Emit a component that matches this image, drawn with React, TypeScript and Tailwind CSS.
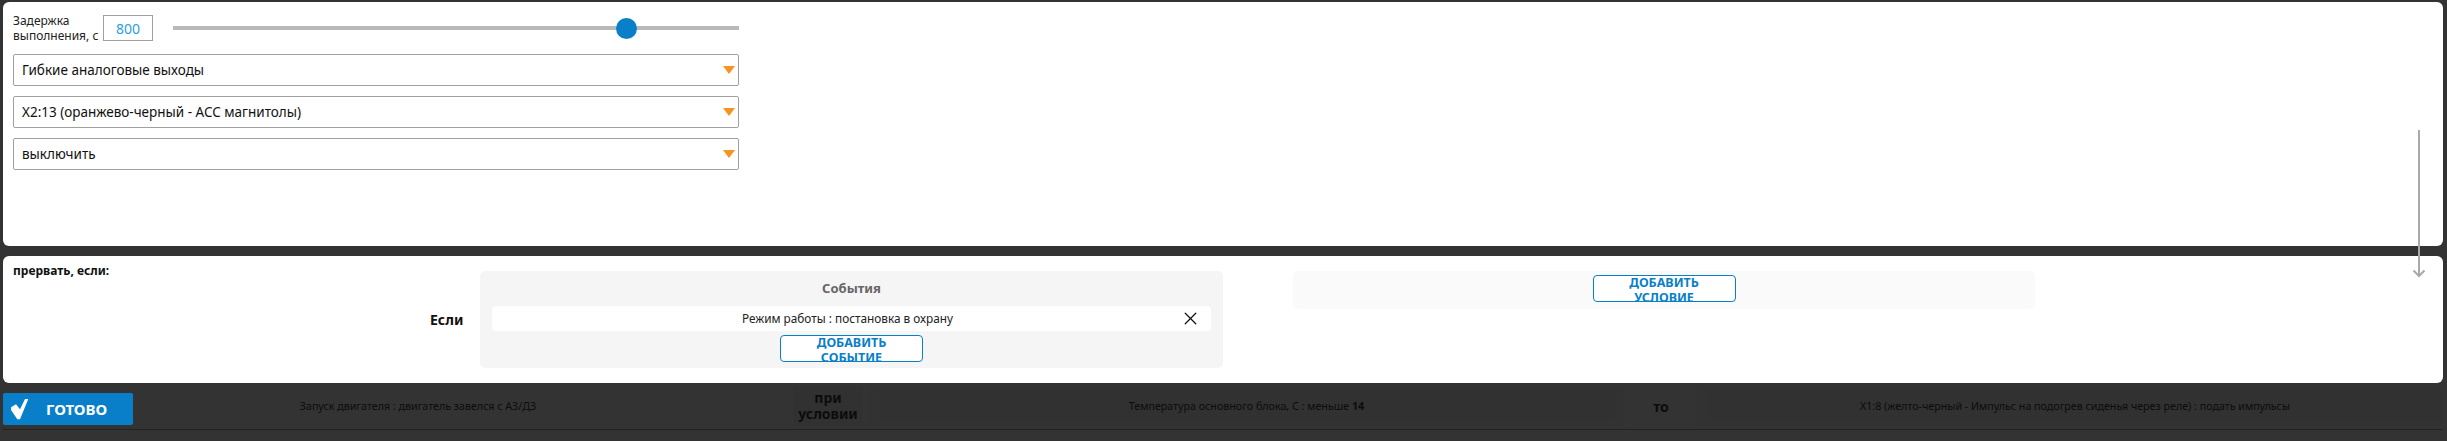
import { X } from 'lucide-react'

const font = { fontFamily: '"Noto Sans", "DejaVu Sans", sans-serif' }

function SelectBox({ text }: { text: string }) {
  return (
    <div className="relative flex h-[32px] items-center rounded-[2px] border border-[#a0a0a0] pl-[8px] text-[13.500px] text-[#111]">
      {text}
      <svg className="absolute right-[3px] top-[11px]" width="12" height="8" viewBox="0 0 12 8">
        <path d="M0 0h12L6 8z" fill="#f7931e" />
      </svg>
    </div>
  )
}

function AddButton({ lines }: { lines: string[] }) {
  return (
    <button className="h-[27px] w-[143px] overflow-hidden rounded-[4px] border border-[#0a7fc9] bg-white text-[12.500px] font-bold leading-[15px] text-[#0a7fc9]">
      {lines.map((l) => (
        <div key={l} className="-mt-[1px] mb-[1px]">{l}</div>
      ))}
    </button>
  )
}

export default function App() {
  return (
    <div className="relative h-[441px] w-[2447px] overflow-hidden bg-[#333333] pl-[3px] pr-[4px] pt-[2px]" style={font}>
      {/* top panel */}
      <div className="h-[244px] rounded-[6px] bg-white pl-[10px] pt-[13px]">
        <div className="flex w-[726px] flex-col gap-[10px]">
          <div className="mb-[3px] flex h-[26px] items-center">
            <div className="w-[90px] whitespace-nowrap text-[12px] leading-[15px] text-[#222]">Задержка<br />выполнения, с</div>
            <div className="flex h-[26px] w-[50px] items-center justify-center border border-[#a0a0a0] text-[14px] text-[#2a9fe0]">800</div>
            <div className="relative ml-[20px] h-[4px] flex-1 bg-[#b9b9b9]">
              <div className="absolute left-[443px] top-[-8px] h-[21px] w-[21px] rounded-full bg-[#0a7fc9]" />
            </div>
          </div>
          <SelectBox text="Гибкие аналоговые выходы" />
          <SelectBox text="X2:13 (оранжево-черный - ACC магнитолы)" />
          <SelectBox text="выключить" />
        </div>
      </div>

      {/* interrupt conditions */}
      <div className="mt-[10px] flex h-[127px] rounded-[6px] bg-white pt-[15px]">
        <div className="w-[420px] pl-[10px] text-[12px] font-bold leading-[0px] text-[#111]">прервать, если:</div>
        <div className="flex h-[97px] w-[57px] items-center pl-[7px] text-[14px] font-bold text-[#111]">Если</div>
        <div className="flex h-[97px] w-[743px] flex-col items-center rounded-[5px] bg-[#f5f5f5] px-[12px]">
          <div className="flex h-[36px] items-center text-[13px] font-bold text-[#666]">События</div>
          <div className="relative flex h-[25px] w-full items-center justify-center rounded-[4px] bg-white pr-[8px] text-[11.800px] text-[#222]">
            Режим работы : постановка в охрану
            <X className="absolute right-[10px] top-[2px]" size={21} strokeWidth={1.5} color="#111" />
          </div>
          <div className="mt-[4px]"><AddButton lines={['ДОБАВИТЬ', 'СОБЫТИЕ']} /></div>
        </div>
        <div className="ml-[70px] flex h-[38px] w-[742px] justify-center rounded-[5px] bg-[#fafafa] pt-[4px]">
          <AddButton lines={['ДОБАВИТЬ', 'УСЛОВИЕ']} />
        </div>
      </div>

      {/* dimmed rule row behind the overlay */}
      <div className="flex h-[47px] items-center border-b border-[#222] text-[10.700px] text-[#0c0c0c]">
        <div className="flex h-[40px] w-[790px] items-center justify-center pl-[40px]">Запуск двигателя : двигатель завелся с АЗ/ДЗ</div>
        <div className="flex h-[40px] w-[70px] items-center justify-center rounded-[4px] bg-[#313131] text-center text-[14px] font-bold leading-[16px]">при условии</div>
        <div className="ml-[5px] flex h-[40px] w-[757px] items-center justify-center rounded-[4px] bg-[#323232]">
          <div className="flex h-[26px] w-[736px] items-center justify-center rounded-[3px] bg-[#313131]">
            <span>Температура основного блока, С : меньше <b>14</b></span>
          </div>
        </div>
        <div className="flex h-[40px] w-[72px] items-center justify-center text-[14px] font-bold">то</div>
        <div className="flex h-[40px] flex-1 items-center rounded-[4px] bg-[#323232] pl-[11px]">
          <div className="flex h-[26px] w-[734px] items-center justify-center rounded-[3px] bg-[#313131]">X1:8 (желто-черный - Импульс на подогрев сиденья через реле) : подать импульсы</div>
        </div>
      </div>

      {/* done button over the row */}
      <div className="absolute left-[3px] top-[393px] flex h-[32px] w-[130px] items-center rounded-[2px] bg-[#0a7fc9] pl-[8px] text-[15px] font-bold text-white">
        <svg width="18" height="21" viewBox="0 0 18 21">
          <path d="M0 8.300 5 5.300 9 10.300 14 0h3.300L9 20.300H6.300L0 11z" fill="#fff" />
        </svg>
        <span className="ml-[17px]">ГОТОВО</span>
      </div>

      {/* long arrow laid over both panels */}
      <svg className="absolute left-[2412px] top-[130px]" width="14" height="148" viewBox="0 0 14 148">
        <path d="M7 0v146M1.500 140.500L7 146l5.500-5.500" fill="none" stroke="#a9a9a9" strokeWidth="2" />
      </svg>
    </div>
  )
}
